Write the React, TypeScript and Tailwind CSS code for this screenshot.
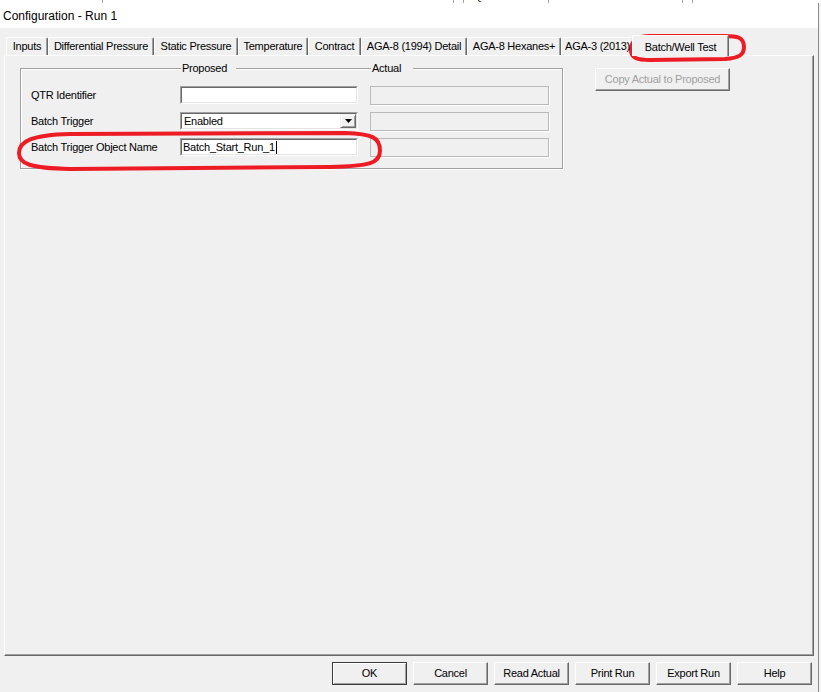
import React from 'react';

const tabs = [
  { label: 'Inputs', w: 'w-[42px]' },
  { label: 'Differential Pressure', w: 'w-[106px]' },
  { label: 'Static Pressure', w: 'w-[84px]' },
  { label: 'Temperature', w: 'w-[70px]' },
  { label: 'Contract', w: 'w-[53px]' },
  { label: 'AGA-8 (1994) Detail', w: 'w-[106px]' },
  { label: 'AGA-8 Hexanes+', w: 'w-[94px]' },
  { label: 'AGA-3 (2013)', w: 'w-[73px]' },
];

const buttons = ['OK', 'Cancel', 'Read Actual', 'Print Run', 'Export Run', 'Help'];

function Sunken({ children }: { children?: React.ReactNode }) {
  return (
    <div className="w-[178px] h-[18px] border border-t-[#a0a0a0] border-l-[#a0a0a0] border-b-white border-r-white">
      <div className="w-full h-full bg-white border border-t-[#696969] border-l-[#696969] border-b-[#e3e3e3] border-r-[#e3e3e3] flex items-center pl-[1px]">
        {children}
      </div>
    </div>
  );
}

function ActualField() {
  return <div className="w-[179px] h-[19px] border border-[#b9b9b9] shadow-[1px_1px_0_#ffffff] bg-[#f0f0f0]" />;
}

export default function App() {
  return (
    <div className="relative w-[821px] h-[692px] overflow-hidden bg-[#f0f0f0] flex flex-col font-['Liberation_Sans',Arial,sans-serif] text-[11px] tracking-[-0.25px] text-black">
      {/* background window strip */}
      <div className="h-[3px] bg-white overflow-hidden shrink-0">
        <div className="h-[13px] -mt-[10px] flex text-[11px] leading-[13px] text-[#222]">
          <div className="w-[103px] border-r border-[#a0a0a0]" />
          <div className="w-[351px] border-r border-[#a0a0a0] relative flex">
            <span className="ml-[19px] w-[116px]">Flow Mass Hole</span>
            <span className="w-[97px]">150.500</span>
            <span>lbs/hr</span>
          </div>
          <div className="w-[10px] border-r border-[#a0a0a0]" />
          <div className="w-[85px] border-r border-[#a0a0a0] pl-[10px]">QTR Identifier</div>
          <div className="w-[134px] border-r border-[#a0a0a0]" />
          <div className="w-[10px] border-r border-[#a0a0a0]" />
        </div>
      </div>

      <div className="flex flex-1 min-h-0">
        <div className="w-[819px] flex flex-col border-r border-[#8a8a8a]">
          {/* title bar */}
          <div className="h-[25px] bg-white flex items-center pl-[3px] text-[12px] tracking-normal shrink-0">
            Configuration - Run 1
          </div>

          {/* body */}
          <div className="flex-1 flex flex-col px-[4px] pt-[7px]">
            {/* tab strip */}
            <div className="h-[20px] flex items-end pl-[2px] relative z-10">
              {tabs.map((t) => (
                <div
                  key={t.label}
                  className={`${t.w} h-[18px] shrink-0 flex items-center justify-center whitespace-nowrap overflow-hidden border-t border-l border-white border-r border-r-[#696969] shadow-[inset_-1px_0_0_#a0a0a0] rounded-t-[2px] pb-[1px]`}
                >
                  {t.label}
                </div>
              ))}
              <div className="w-[97px] h-[21px] -ml-[2px] -mb-[1px] shrink-0 bg-[#f0f0f0] flex items-start justify-center pt-[3px] border-t border-l border-white border-r border-r-[#696969] shadow-[inset_-1px_0_0_#a0a0a0] rounded-t-[2px]">
                Batch/Well Test
              </div>
            </div>

            {/* tab panel */}
            <div className="h-[601px] border-t border-l border-white border-r border-b border-r-[#696969] border-b-[#696969] shadow-[inset_-1px_-1px_0_#a0a0a0] flex items-start pt-[12px] pl-[15px] gap-[32px]">
              {/* group box */}
              <div className="relative w-[543px] h-[101px] border border-[#a0a0a0] shadow-[inset_1px_1px_0_#ffffff,1px_1px_0_#ffffff] pt-[17px] pl-[10px]">
                <span className="absolute -top-[7px] left-[160px] w-[55px] h-[13px] leading-[13px] bg-[#f0f0f0] pl-[1px]">Proposed</span>
                <span className="absolute -top-[7px] left-[350px] w-[42px] h-[13px] leading-[13px] bg-[#f0f0f0] pl-[1px]">Actual</span>
                <div className="flex flex-col gap-[8px]">
                  <div className="flex items-center h-[18px]">
                    <div className="w-[149px]">QTR Identifier</div>
                    <Sunken />
                    <div className="w-[12px]" />
                    <ActualField />
                  </div>
                  <div className="flex items-center h-[18px]">
                    <div className="w-[149px]">Batch Trigger</div>
                    <Sunken>
                      <div className="flex-1 pl-[1px]">Enabled</div>
                      <div className="w-[16px] h-[14px] mr-[0px] bg-[#f0f0f0] border border-t-[#f0f0f0] border-l-[#f0f0f0] border-b-[#696969] border-r-[#696969] shadow-[inset_1px_1px_0_#ffffff,inset_-1px_-1px_0_#a0a0a0] flex items-center justify-center">
                        <svg width="7" height="4" viewBox="0 0 7 4">
                          <path d="M0 0 H7 L3.5 4 Z" fill="#000" />
                        </svg>
                      </div>
                    </Sunken>
                    <div className="w-[12px]" />
                    <ActualField />
                  </div>
                  <div className="flex items-center h-[18px]">
                    <div className="w-[149px]">Batch Trigger Object Name</div>
                    <Sunken>
                      <span>Batch_Start_Run_1</span>
                      <span className="w-px h-[13px] bg-black ml-[1px]" />
                    </Sunken>
                    <div className="w-[12px]" />
                    <ActualField />
                  </div>
                </div>
              </div>

              {/* copy button */}
              <div className="w-[135px] h-[23px] flex items-center justify-center border border-t-white border-l-white border-b-[#696969] border-r-[#696969] shadow-[inset_-1px_-1px_0_#a0a0a0] text-[#a0a0a0]">
                Copy Actual to Proposed
              </div>
            </div>

            {/* bottom buttons */}
            <div className="flex justify-end gap-[6px] mt-[6px] pr-[2px]">
              {buttons.map((b) => (
                <div
                  key={b}
                  className={
                    b === 'OK'
                      ? 'w-[75px] h-[23px] flex items-center justify-center border border-[#3c3c3c] shadow-[inset_1px_1px_0_#ffffff,inset_-1px_-1px_0_#a0a0a0]'
                      : 'w-[75px] h-[23px] flex items-center justify-center border border-t-white border-l-white border-b-[#696969] border-r-[#696969] shadow-[inset_-1px_-1px_0_#a0a0a0]'
                  }
                >
                  {b}
                </div>
              ))}
            </div>
          </div>
        </div>
        <div className="flex-1 bg-[#f4f4f4]" />
      </div>

      {/* hand-drawn red highlights */}
      <svg className="absolute inset-0 pointer-events-none" width="821" height="692" viewBox="0 0 821 692">
        <path
          d="M380 151 C380 137 372 134 345 133 L70 134 C32 135 19 141 19 153 C19 164 30 168 70 169 L330 167 C370 166 380 163 380 151 Z"
          fill="none"
          stroke="#ed1c24"
          strokeWidth="4"
          strokeLinejoin="round"
        />
        <path
          d="M744 47 C744 37 737 36 725 36 L650 36 C637 36 631 41 631 50 C631 58 637 60 650 60 L725 59 C739 58 744 55 744 47 Z"
          fill="none"
          stroke="#ed1c24"
          strokeWidth="4"
          strokeLinejoin="round"
        />
      </svg>
    </div>
  );
}
